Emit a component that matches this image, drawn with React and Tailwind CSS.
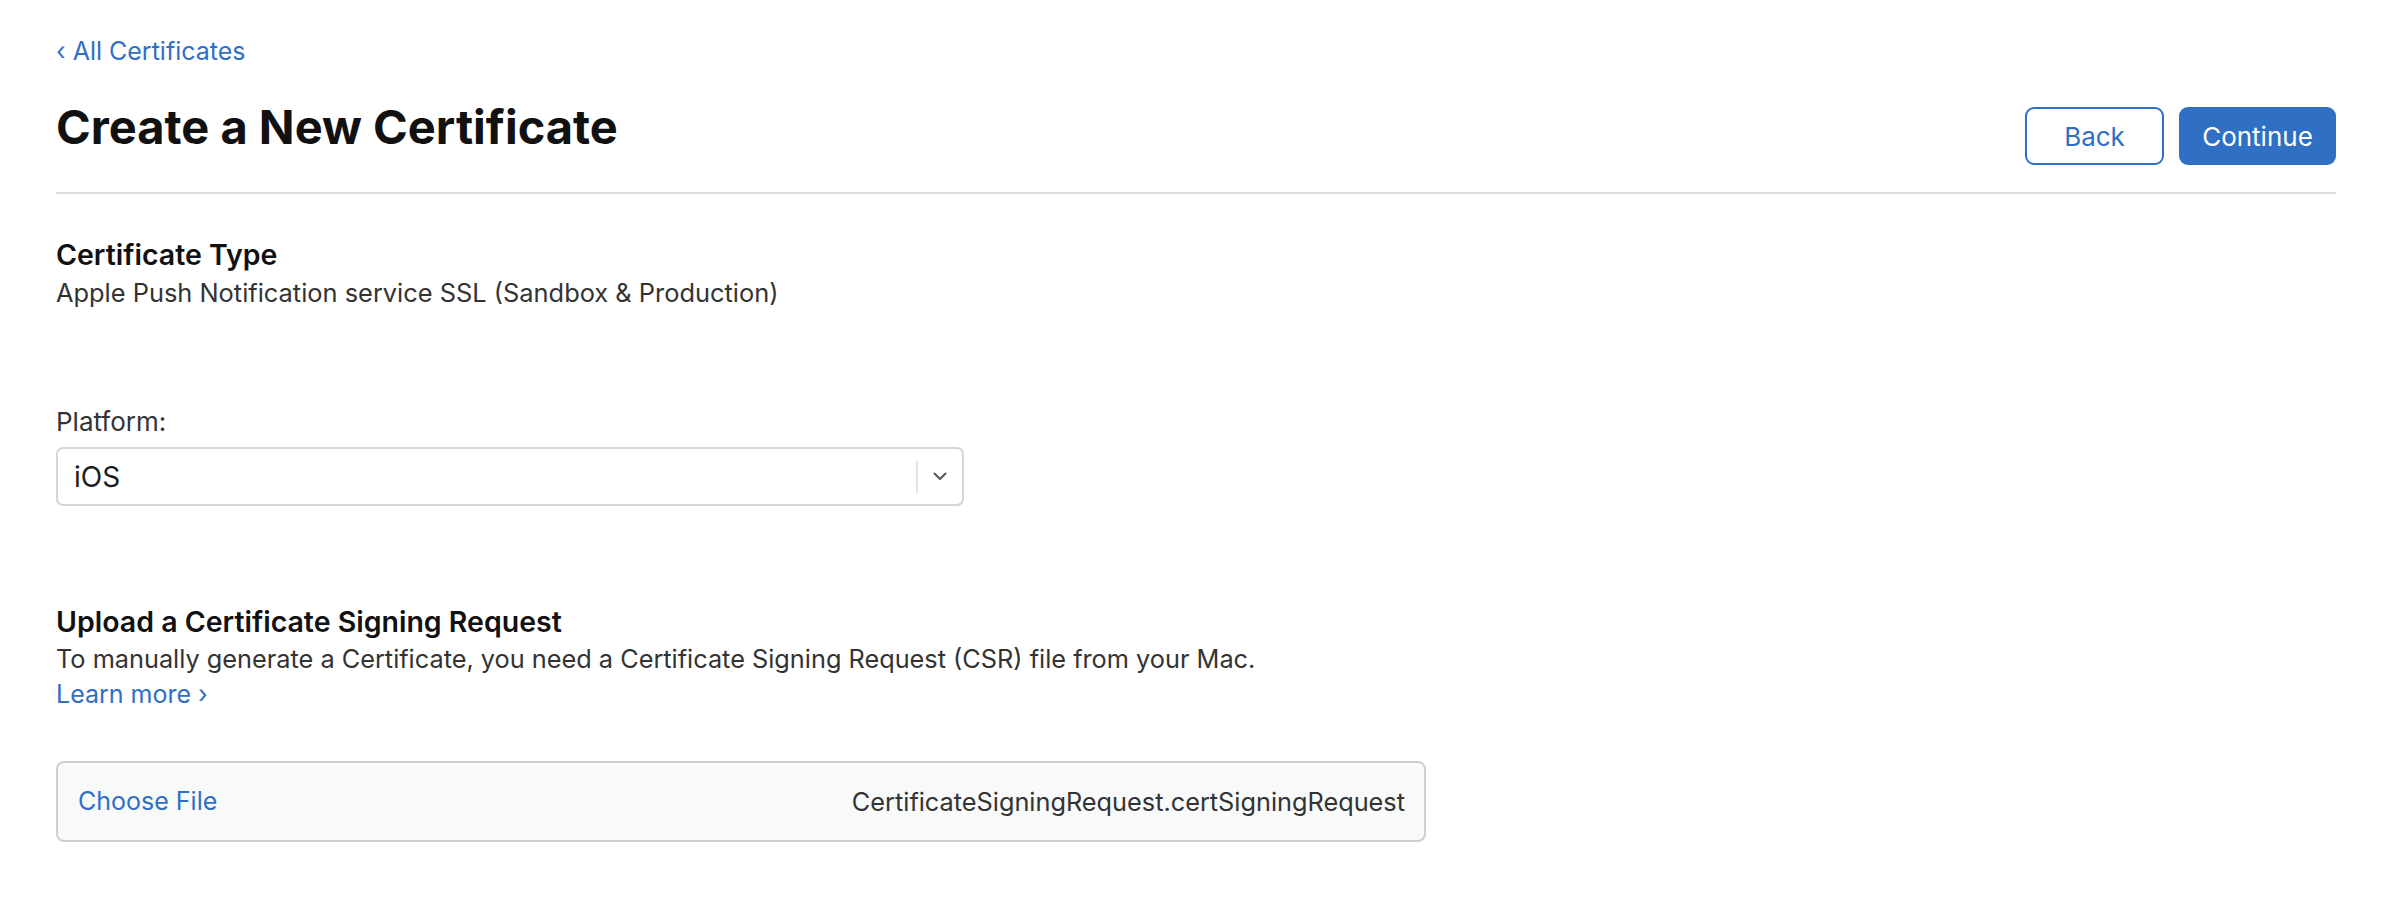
import React from 'react';

const Chevron = () => (
  <svg width="14" height="9" viewBox="0 0 14 9" fill="none" className="text-[#555]">
    <path d="M1.5 1.5 7 7l5.5-5.5" stroke="currentColor" strokeWidth="2" strokeLinecap="round" strokeLinejoin="round" />
  </svg>
);

const App = () => {
  return (
    <div className="min-h-screen bg-white text-[#1d1d1f] [font-family:Inter,'Noto_Sans',sans-serif]">
      <div className="pl-[56px] pr-[50px] pt-[36px]">
        <a href="#" className="block text-[25px] leading-[30px] text-[#2f6fc4]">
          ‹ All Certificates
        </a>

        <div className="mt-[32px] flex items-start justify-between border-b-2 border-[#dcdcdc] pb-[27px]">
          <h1 className="text-[47px] font-bold leading-[58px] text-[#111]">Create a New Certificate</h1>
          <div className="mt-[9px] flex gap-[15px]">
            <button className="h-[58px] w-[139px] rounded-[9px] border-2 border-[#2f6fc4] text-[26px] text-[#2f6fc4]">
              Back
            </button>
            <button className="h-[58px] w-[157px] rounded-[9px] bg-[#2f6fc4] text-[26px] text-white">
              Continue
            </button>
          </div>
        </div>

        <div className="mt-[45px]">
          <h2 className="text-[28.5px] font-semibold leading-[32px] text-[#111]">Certificate Type</h2>
          <p className="mt-[6px] text-[25.4px] leading-[32px] text-[#333]">
            Apple Push Notification service SSL (Sandbox &amp; Production)
          </p>
        </div>

        <div className="mt-[99px]">
          <label className="block text-[26px] leading-[28px] text-[#333]">Platform:</label>
          <div className="mt-[11px] flex h-[59px] w-[908px] items-center rounded-[7px] border-2 border-[#d6d6d6] bg-white">
            <span className="flex-1 pl-[16px] text-[28px] text-[#1d1d1f]">iOS</span>
            <span className="h-[32px] w-[2px] bg-[#e3e3e3]" />
            <span className="flex w-[44px] items-center justify-center">
              <Chevron />
            </span>
          </div>
        </div>

        <div className="mt-[98px]">
          <h2 className="text-[28.5px] font-semibold leading-[36px] text-[#111]">Upload a Certificate Signing Request</h2>
          <p className="mt-[1px] text-[25.3px] leading-[36px] text-[#333]">
            To manually generate a Certificate, you need a Certificate Signing Request (CSR) file from your Mac.
          </p>
          <a href="#" className="block text-[25px] leading-[35px] text-[#2f6fc4]">
            Learn more ›
          </a>
          <div className="mt-[49px] flex h-[81px] w-[1370px] items-center justify-between rounded-[8px] border-2 border-[#cfcfcf] bg-[#f8f9f9] pl-[20px] pr-[19px]">
            <span className="text-[25px] text-[#2f6fc4]">Choose File</span>
            <span className="text-[25.3px] text-[#333]">CertificateSigningRequest.certSigningRequest</span>
          </div>
        </div>
      </div>
    </div>
  );
};

export default App;
